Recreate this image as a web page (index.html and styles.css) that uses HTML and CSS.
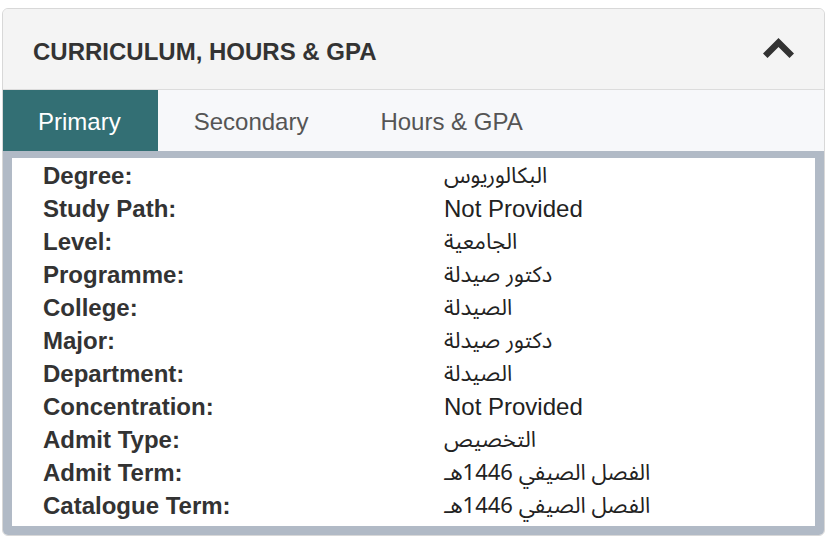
FILE: index.html
```html
<!DOCTYPE html>
<html lang="en">
<head>
<meta charset="utf-8">
<title>Curriculum, Hours &amp; GPA</title>
<link rel="stylesheet" href="styles.css">
</head>
<body>
<div class="card">
  <div class="card-header">
    <h2 class="title">CURRICULUM, HOURS &amp; GPA</h2>
    <svg class="chev" width="31" height="20" viewBox="0 0 31 20" aria-hidden="true"><polygon points="15.5,0 31,15.5 26.5,20 15.5,9 4.5,20 0,15.5" fill="#333"/></svg>
  </div>
  <div class="tabs">
    <div class="tab active">Primary</div>
    <div class="tab">Secondary</div>
    <div class="tab">Hours &amp; GPA</div>
  </div>
  <div class="tab-body">
    <div class="panel">
      <dl class="rows">
        <dt>Degree:</dt><dd class="ar" lang="ar">البكالوريوس</dd>
        <dt>Study Path:</dt><dd>Not Provided</dd>
        <dt>Level:</dt><dd class="ar" lang="ar">الجامعية</dd>
        <dt>Programme:</dt><dd class="ar" lang="ar">دكتور صيدلة</dd>
        <dt>College:</dt><dd class="ar" lang="ar">الصيدلة</dd>
        <dt>Major:</dt><dd class="ar" lang="ar">دكتور صيدلة</dd>
        <dt>Department:</dt><dd class="ar" lang="ar">الصيدلة</dd>
        <dt>Concentration:</dt><dd>Not Provided</dd>
        <dt>Admit Type:</dt><dd class="ar" lang="ar">التخصيص</dd>
        <dt>Admit Term:</dt><dd class="ar" lang="ar">الفصل الصيفي 1446هـ</dd>
        <dt>Catalogue Term:</dt><dd class="ar" lang="ar">الفصل الصيفي 1446هـ</dd>
      </dl>
    </div>
  </div>
</div>
</body>
</html>
```

FILE: styles.css
```css
* { box-sizing: border-box; }
html, body { margin: 0; padding: 0; background: #fff; }
body {
  font-family: "Liberation Sans", Arial, "DejaVu Sans", sans-serif;
  color: #333;
}
.card {
  margin: 8px 0 0 2px;
  width: 823px;
  border: 1px solid #d8d8d8;
  border-radius: 6px;
  overflow: hidden;
  background: #f4f4f4;
}
.card-header {
  height: 81px;
  display: flex;
  align-items: center;
  justify-content: space-between;
  padding: 5px 30px 0 30px;
  background: #f4f4f4;
  border-bottom: 1px solid #dcdcdc;
}
.title {
  margin: 0;
  font-size: 24px;
  font-weight: bold;
  color: #333;
}
.chev { display: block; margin-top: -8px; }
.tabs {
  display: flex;
  height: 61px;
  padding-top: 3px;
  background: #f7f8fa;
}
.tab {
  display: flex;
  align-items: center;
  padding: 0 36px;
  font-size: 24px;
  color: #555;
}
.tab.active {
  background: #336f74;
  color: #fff;
  margin-top: -3px;
  padding: 3px 37px 0 35px;
}
.tab-body {
  background: #b1bac6;
  padding: 7px 9px 9px 9px;
}
.panel {
  background: #fff;
  height: 368px;
  padding: 1px 0 0 31px;
}
.rows {
  margin: 0;
  display: grid;
  grid-template-columns: 401px 1fr;
  grid-auto-rows: 33px;
  align-items: center;
  font-size: 24px;
  line-height: 28px;
  color: #333;
}
.rows dt { font-weight: bold; }
.rows dd { margin: 0; color: #222; }
.rows dd.ar {
  font-family: "Noto Sans Arabic", "Noto Naskh Arabic", "DejaVu Sans", sans-serif;
  font-size: 22px;
  line-height: 28px;
}
```
